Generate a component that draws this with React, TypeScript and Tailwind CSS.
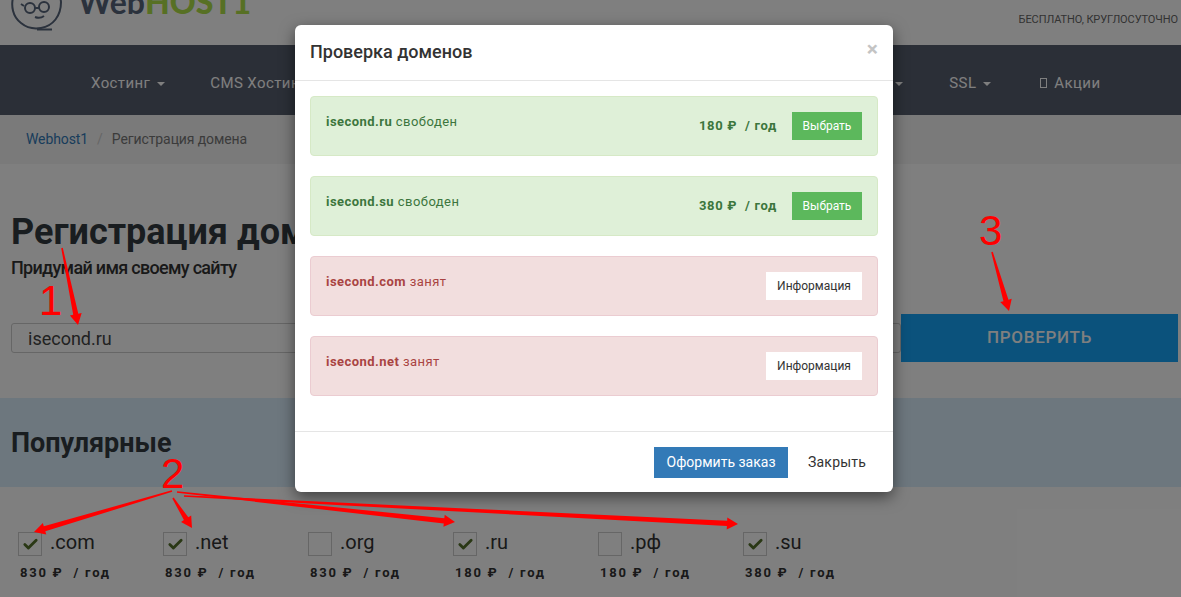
import { Check } from 'lucide-react'

const roboto = "font-['Roboto','Liberation_Sans',sans-serif]"

function Caret() {
  return <span className="ml-[7px] inline-block align-middle border-x-4 border-t-4 border-x-transparent border-t-current" />
}

function NavLink({ label, caret = true, className = '' }: { label: string; caret?: boolean; className?: string }) {
  return (
    <a className={`whitespace-nowrap text-[15px] tracking-[0.4px] text-white ${className}`}>
      {label}
      {caret && <Caret />}
    </a>
  )
}

const zones = [
  { name: '.com', price: '830', checked: true },
  { name: '.net', price: '830', checked: true },
  { name: '.org', price: '830', checked: false },
  { name: '.ru', price: '180', checked: true },
  { name: '.рф', price: '180', checked: false },
  { name: '.su', price: '380', checked: true },
]

function Zone({ name, price, checked }: { name: string; price: string; checked: boolean }) {
  return (
    <div className="w-[145px]">
      <div className="flex h-6 items-center gap-2">
        <span className="flex size-6 items-center justify-center border border-[#ccc] bg-white">
          {checked && <Check size={17} strokeWidth={4} className="text-[#54702a]" />}
        </span>
        <span className="-mt-[4px] text-[20px] text-[#333]">{name}</span>
      </div>
      <div className="mt-[9px] pl-[2px] text-[13px] font-bold leading-[15px] tracking-[1.75px] text-[#333]">
        {price} ₽ &nbsp;/ год
      </div>
    </div>
  )
}

function FreeAlert({ domain, price }: { domain: string; price: string }) {
  return (
    <div className="flex h-[60px] justify-between rounded border border-[#d6e9c6] bg-[#dff0d8] pl-[15px] pr-[15px] text-[#3c763d]">
      <p className="pt-[16px] text-[13px] leading-[18px] tracking-[0.45px]">
        <b>{domain}</b> свободен
      </p>
      <div className="flex items-center gap-[15px]">
        <span className="text-[13px] font-bold tracking-[0.7px]">{price} ₽ &nbsp;/ год</span>
        <button className="h-[28px] w-[70px] bg-[#5cb85c] text-[12px] text-white">Выбрать</button>
      </div>
    </div>
  )
}

function BusyAlert({ domain }: { domain: string }) {
  return (
    <div className="flex h-[60px] items-center justify-between rounded border border-[#ebccd1] bg-[#f2dede] pl-[15px] pr-[15px] text-[#a94442]">
      <p className="-mt-[8px] text-[13px] leading-[18px] tracking-[0.45px]">
        <b>{domain}</b> занят
      </p>
      <button className="h-[28px] w-[96px] bg-white text-[12px] text-[#333]">Информация</button>
    </div>
  )
}

function Arrow({ x1, y1, x2, y2 }: { x1: number; y1: number; x2: number; y2: number }) {
  const len = Math.hypot(x2 - x1, y2 - y1)
  const ux = (x2 - x1) / len
  const uy = (y2 - y1) / len
  const nx = -uy
  const ny = ux
  const bx = x2 - ux * 11
  const by = y2 - uy * 11
  const pts = [
    [x1 + nx * 0.8, y1 + ny * 0.8],
    [bx + nx * 2.6, by + ny * 2.6],
    [bx + nx * 6, by + ny * 6],
    [x2, y2],
    [bx - nx * 6, by - ny * 6],
    [bx - nx * 2.6, by - ny * 2.6],
    [x1 - nx * 0.8, y1 - ny * 0.8],
  ]
  return <polygon points={pts.map((p) => p.join(',')).join(' ')} fill="#f00" />
}

export default function App() {
  return (
    <div className={`relative h-[597px] overflow-hidden bg-white ${roboto}`}>
      {/* header, page is scrolled so the logo is cut off */}
      <header className="flex h-[45px] justify-between overflow-hidden pl-[11px] pr-[3px]">
        <div className="flex h-[31px] items-end">
          <svg width="52" height="31" viewBox="0 0 52 31" fill="none" stroke="#56647a" strokeWidth="2">
            <path d="M3 -6 C-1 6 2 17 10 23 C16 28 24 29 30 28 C42 26 50 16 50 2 L49 -6" />
            <path d="M26 29.5 H41" />
            <circle cx="19" cy="8" r="5" />
            <circle cx="33" cy="7" r="5" />
            <path d="M24 8 h4 M13 6 l-3 -2 M24 17 q5 2 9 -1 M14 -1 l16 -2" />
          </svg>
          <div className="ml-[15px] flex self-start whitespace-nowrap font-['Lato',sans-serif] text-[32px] font-bold leading-[32px] -mt-[14px]">
            <span className="text-[#56647a]">Web</span>
            <span className="font-black text-[#aee048]">HOST1</span>
          </div>
        </div>
        <div className="pt-[13px] text-[11px] leading-[13px] tracking-[-0.1px] text-[#666]">БЕСПЛАТНО, КРУГЛОСУТОЧНО</div>
      </header>

      <nav className="flex h-[70px] items-center bg-[#575e6e] pl-[91px] pt-[6px]">
        <NavLink label="Хостинг" />
        <NavLink label="CMS Хостинг" className="ml-[45px]" />
        <NavLink label="Домены" className="ml-[505px]" />
        <NavLink label="SSL" className="ml-[46px]" />
        <span className="ml-[49px] inline-block h-[10px] w-[7px] border border-white" />
        <NavLink label="Акции" caret={false} className="ml-[7px]" />
      </nav>

      <div className="flex h-[49px] items-center bg-[#f5f5f5] pl-[26px] text-[14px] tracking-[-0.1px]">
        <a className="text-[#337ab7]">Webhost1</a>
        <span className="px-[9px] text-[#ccc]">/</span>
        <span className="text-[#777]">Регистрация домена</span>
      </div>

      <section className="h-[234px] bg-[#fff] pl-[11px] pr-[3px] pt-[45px]">
        <h1 className="text-[36px] font-bold leading-[46px] text-[#333a40]">Регистрация домена</h1>
        <p className="mt-[3px] text-[18px] font-medium leading-[20px] tracking-[-0.7px] text-[#333]">Придумай имя своему сайту</p>
        <div className="flex items-start">
          <input
            readOnly
            value="isecond.ru"
            className="mt-[45px] h-[30px] flex-1 rounded-[3px] border border-[#ccc] pl-[16px] text-[18px] text-[#444]"
          />
          <button className="mt-[36px] h-[48px] w-[277px] bg-[#16a4f8] text-[17px] font-medium tracking-[0.7px] text-white">ПРОВЕРИТЬ</button>
        </div>
      </section>

      <section className="h-[89px] bg-[#dbeffc] pl-[11px] pt-[29px]">
        <h2 className="text-[27px] font-bold leading-[32px] text-[#333a40]">Популярные</h2>
      </section>

      <div className="flex pl-[18px] pt-[45px]">
        {zones.map((z) => (
          <Zone key={z.name} {...z} />
        ))}
      </div>

      {/* backdrop and modal */}
      <div className="absolute inset-0 bg-black/50">
        <div className="ml-[295px] mt-[25px] h-[467px] w-[598px] rounded-md bg-white shadow-[0_5px_15px_rgba(0,0,0,0.5)]">
          <div className="flex h-[56px] items-start justify-between border-b border-[#e5e5e5] px-[15px] pt-[15px]">
            <h4 className="text-[18px] font-medium leading-[24px] text-[#333]">Проверка доменов</h4>
            <span className="-mt-[1px] text-[21px] font-bold leading-[21px] text-[#c4c4c4]">×</span>
          </div>
          <div className="flex h-[350px] flex-col gap-5 px-[15px] pt-[15px]">
            <FreeAlert domain="isecond.ru" price="180" />
            <FreeAlert domain="isecond.su" price="380" />
            <BusyAlert domain="isecond.com" />
            <BusyAlert domain="isecond.net" />
          </div>
          <div className="flex items-center justify-end border-t border-[#e5e5e5] pr-[27px] pt-[15px]">
            <button className="h-[31px] w-[134px] bg-[#337ab7] text-[14px] text-white">Оформить заказ</button>
            <button className="ml-[20px] text-[14px] leading-[31px] tracking-[0.2px] text-[#333]">Закрыть</button>
          </div>
        </div>
      </div>

      {/* red marks drawn on top of the screenshot */}
      <svg className="absolute inset-0" width="1181" height="597">
        <Arrow x1={62} y1={248} x2={78} y2={325} />
        <Arrow x1={992} y1={252} x2={1009} y2={311} />
        <Arrow x1={172} y1={491} x2={34} y2={532} />
        <Arrow x1={173} y1={498} x2={192} y2={528} />
        <Arrow x1={177} y1={492} x2={455} y2={522} />
        <Arrow x1={184} y1={496} x2={738} y2={524} />
      </svg>
      <span className="absolute left-[39px] top-[278px] font-['Liberation_Sans',sans-serif] text-[42px] leading-[46px] text-[#f00]">1</span>
      <span className="absolute left-[161px] top-[451px] font-['Liberation_Sans',sans-serif] text-[42px] leading-[46px] text-[#f00]">2</span>
      <span className="absolute left-[979px] top-[208px] font-['Liberation_Sans',sans-serif] text-[42px] leading-[46px] text-[#f00]">3</span>
    </div>
  )
}
